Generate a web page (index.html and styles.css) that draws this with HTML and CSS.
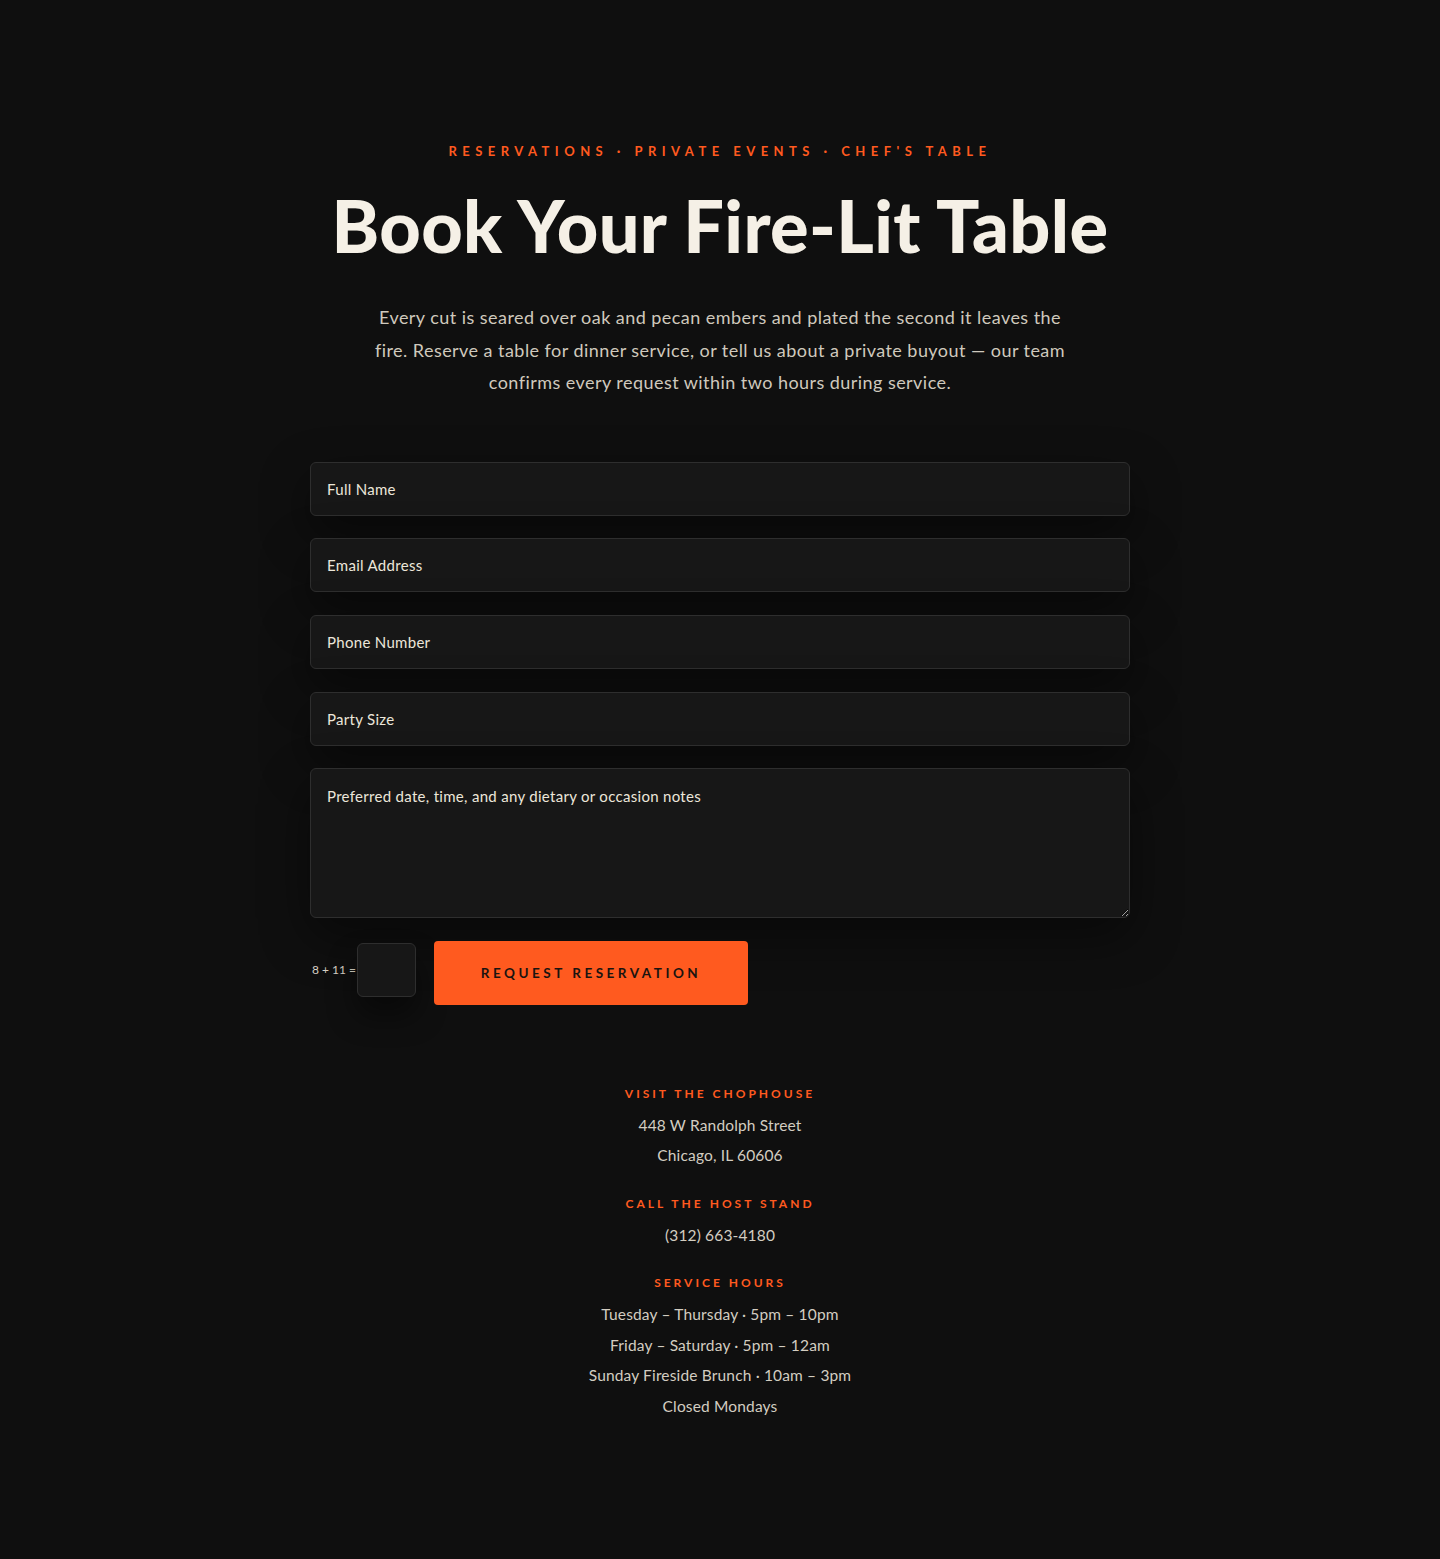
FILE: index.html
```html
<!DOCTYPE html>
<html lang="en">
<head>
    <meta charset="UTF-8">
    <meta name="viewport" content="width=device-width, initial-scale=1.0">
    <title>Book Your Fire-Lit Table</title>
    <link rel="stylesheet" href="styles.css">
</head>
<body>
    <main class="booking">
        <header class="intro">
            <p class="eyebrow">Reservations · Private Events · Chef's Table</p>
            <h1 class="title">Book Your Fire-Lit Table</h1>
            <p class="lead">Every cut is seared over oak and pecan embers and plated the second it leaves the fire. Reserve a table for dinner service, or tell us about a private buyout — our team confirms every request within two hours during service.</p>
        </header>

        <form class="booking-form" id="bookingForm">
            <input class="field" type="text" name="name" placeholder="Full Name">
            <input class="field" type="email" name="email" placeholder="Email Address">
            <input class="field" type="tel" name="phone" placeholder="Phone Number">
            <input class="field" type="text" name="party" placeholder="Party Size">
            <textarea class="field notes" name="notes" placeholder="Preferred date, time, and any dietary or occasion notes"></textarea>
            <div class="form-footer">
                <label class="captcha">
                    <span class="captcha-q">8 + 11 =</span>
                    <input class="captcha-input" type="text" name="captcha">
                </label>
                <button type="submit" class="submit-btn">Request Reservation</button>
            </div>
        </form>

        <section class="info">
            <div class="info-block">
                <h2 class="info-label">Visit the Chophouse</h2>
                <p>448 W Randolph Street</p>
                <p>Chicago, IL 60606</p>
            </div>
            <div class="info-block">
                <h2 class="info-label">Call the Host Stand</h2>
                <p>(312) 663-4180</p>
            </div>
            <div class="info-block">
                <h2 class="info-label">Service Hours</h2>
                <p>Tuesday – Thursday · 5pm – 10pm</p>
                <p>Friday – Saturday · 5pm – 12am</p>
                <p>Sunday Fireside Brunch · 10am – 3pm</p>
                <p>Closed Mondays</p>
            </div>
        </section>
    </main>
</body>
</html>
```

FILE: styles.css
```css
body {
    font-family: "Lato", "Liberation Sans", sans-serif;
    background-color: #0f0f0f;
    color: #d6d0c4;
    margin: 0;
    padding: 0;
    min-height: 1559px;
}
.booking {
    width: 820px;
    margin: 0 auto;
    padding: 143px 0 140px;
}
.intro {
    text-align: center;
}
.eyebrow {
    margin: 0;
    color: #ff5a1f;
    font-size: 13px;
    font-weight: 700;
    letter-spacing: 0.42em;
    text-transform: uppercase;
    line-height: 16px;
}
.title {
    margin: 26px 0 0;
    color: #f5f0e6;
    font-size: 72px;
    font-weight: 900;
    letter-spacing: 0.005em;
    line-height: 80px;
}
.lead {
    width: 700px;
    margin: 36px auto 0;
    font-size: 18px;
    line-height: 32.5px;
    letter-spacing: 0.025em;
    color: #cfc9bd;
}
.booking-form {
    margin-top: 63px;
    display: flex;
    flex-direction: column;
    gap: 22.7px;
}
.field {
    display: block;
    width: 100%;
    height: 54px;
    padding: 0 16px;
    box-sizing: border-box;
    background-color: #171717;
    border: 1px solid #2e2e2e;
    border-radius: 6px;
    box-shadow: 0 18px 50px rgba(0, 0, 0, 0.45);
    color: #f0ebe0;
    font-family: inherit;
    font-size: 15px;
    letter-spacing: 0.02em;
    outline: none;
}
.field::placeholder {
    color: #ece6da;
}
.notes {
    height: 150px;
    padding: 17px 16px;
    resize: vertical;
    line-height: 20px;
}
.form-footer {
    display: flex;
    align-items: flex-start;
    gap: 18px;
}
.captcha {
    display: flex;
    align-items: center;
    gap: 1px;
    height: 58px;
    padding-left: 2px;
}
.captcha-q {
    font-size: 12px;
    color: #d6d0c4;
}
.captcha-input {
    width: 59px;
    height: 54px;
    box-sizing: border-box;
    background-color: #171717;
    border: 1px solid #2e2e2e;
    border-radius: 6px;
    box-shadow: 0 18px 30px rgba(0, 0, 0, 0.45);
    outline: none;
}
.submit-btn {
    width: 314px;
    height: 64px;
    background-color: #ff5a1f;
    color: #1a1410;
    border: none;
    border-radius: 4px;
    font-family: inherit;
    font-size: 13.5px;
    font-weight: 700;
    letter-spacing: 0.26em;
    text-transform: uppercase;
    cursor: pointer;
}
.info {
    margin-top: 81px;
    text-align: center;
}
.info-block {
    margin-bottom: 25px;
}
.info-label {
    margin: 0 0 8px;
    color: #ff5a1f;
    font-size: 12px;
    font-weight: 700;
    letter-spacing: 0.25em;
    text-transform: uppercase;
    line-height: 16px;
}
.info-block p {
    margin: 0;
    font-size: 15.5px;
    line-height: 30.5px;
    letter-spacing: 0.01em;
    color: #d3cdc1;
}
```
